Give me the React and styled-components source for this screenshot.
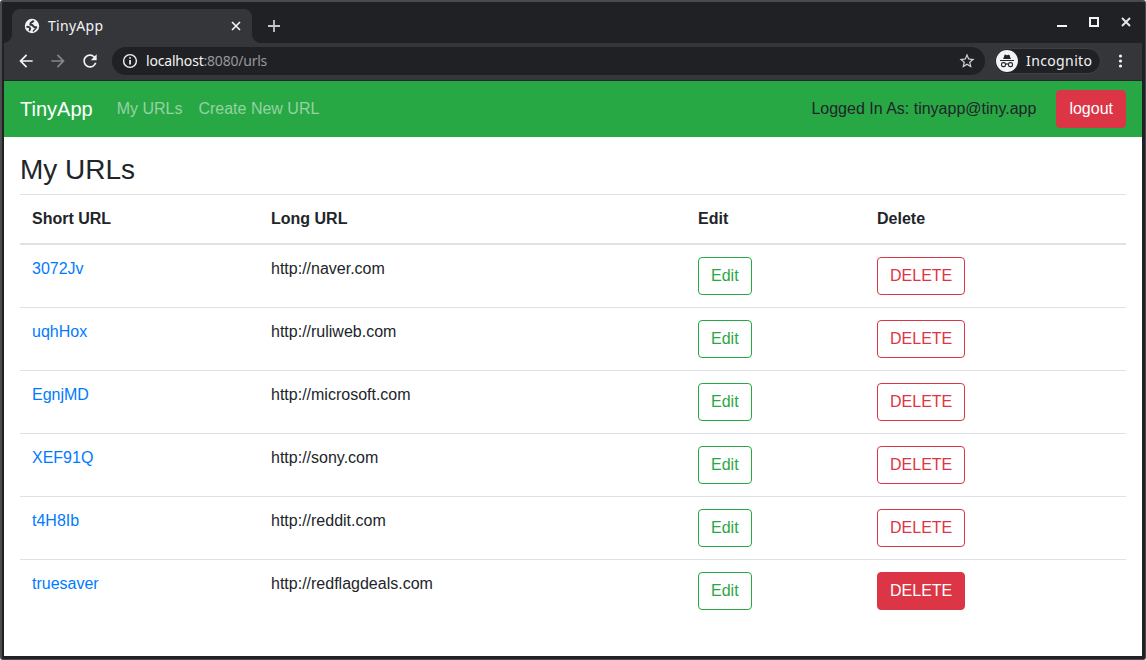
import React from "react";
import styled, { createGlobalStyle, css } from "styled-components";

const Global = createGlobalStyle`
  *, *::before, *::after { box-sizing: border-box; }
  html, body { margin: 0; padding: 0; overflow: hidden; background: #fff; }
  body { font-family: "Liberation Sans", Arial, sans-serif; font-size: 16px; line-height: 1.5; color: #212529; }
`;

const Frame = styled.div`
  width: 1146px; height: 660px;
  border: solid #4a4b4a; border-width: 2px 1px 1px 2px;
  border-radius: 3px;
  background: #202124;
  padding: 0 3px 3px 2px;
  display: flex; flex-direction: column;
`;
const TabStrip = styled.div`
  height: 41px; flex: none; display: flex; align-items: flex-end;
`;
const Tab = styled.div`
  position: relative;
  width: 240px; height: 34px; margin-left: 8px;
  background: #35363a; border-radius: 8px 8px 0 0;
  display: flex; align-items: center; padding: 0 10px 0 12px;
  color: #f1f3f4;
  &::before, &::after {
    content: ""; position: absolute; bottom: 0; width: 8px; height: 8px;
  }
  &::before { left: -8px; background: radial-gradient(circle at 0 0, #202124 7.5px, #35363a 8px); }
  &::after { right: -8px; background: radial-gradient(circle at 100% 0, #202124 7.5px, #35363a 8px); }
`;
const ChromeText = styled.span`
  font-family: "Noto Sans", "Open Sans", sans-serif;
  font-size: 14px; line-height: 20px; white-space: pre;
  letter-spacing: ${(p) => p.$spacing || 0}px;
  color: ${(p) => p.$color || "#f1f3f4"};
`;
const TabTitle = styled(ChromeText)` margin-left: 8px; flex: 1; `;
const NewTab = styled.div` display: flex; margin-left: 14px; padding-bottom: 9px; `;
const WindowControls = styled.div`
  margin-left: auto; align-self: flex-start; display: flex; gap: 16px; padding: 12px 8px 0 0;
`;
const Toolbar = styled.div`
  height: 38px; flex: none; background: #35363a; border-bottom: 1px solid #27282b;
  display: flex; align-items: center; padding: 0 13px 1px 12px;
`;
const NavIcons = styled.div` display: flex; gap: 12px; `;
const Omnibox = styled.div`
  width: 873px; height: 28px; margin-left: 12px; border-radius: 14px; background: #202124;
  display: flex; align-items: center; padding: 0 9px 0 8px;
`;
const Address = styled.div` flex: 1; margin-left: 6px; display: flex; `;
const Profile = styled.div`
  width: 107px; height: 26px; margin-left: 9px; border-radius: 13px;
  background: #202124; border: 1px solid #3f4043;
  display: flex; align-items: center; gap: 8px; padding-left: 1px;
`;
const Menu = styled.div` margin-left: auto; display: flex; `;

const Page = styled.div` flex: 1; background: #fff; `;
const Navbar = styled.nav`
  height: 56px; background: #28a745; padding: 8px 16px; display: flex; align-items: center;
`;
const Brand = styled.a` font-size: 20px; line-height: 30px; color: #fff; margin-right: 16px; `;
const NavLink = styled.a` padding: 0 8px; color: rgba(255, 255, 255, 0.5); `;
const Account = styled.div` margin-left: auto; display: flex; align-items: center; gap: 20px; `;

const Button = styled.button`
  font: inherit; line-height: 24px; padding: 6px 12px; height: 38px;
  border-radius: 4px; border: 1px solid ${(p) => p.$color}; white-space: nowrap;
  ${(p) => p.$filled
    ? css`color: #fff; background: ${p.$color};`
    : css`color: ${p.$color}; background: transparent;`}
`;
const Content = styled.main` padding: 16px 16px 0; `;
const Heading = styled.h3`
  margin: 0; height: 41px; font-size: 28px; font-weight: 500; line-height: 33.6px;
`;
const Row = styled.div`
  display: grid; grid-template-columns: 239px 427px 179px 1fr;
  border-top: 1px solid #dee2e6;
  ${(p) => p.$header && css`font-weight: 700; border-bottom: 2px solid #dee2e6;`}
  ${(p) => p.$first && css`border-top: 0;`}
`;
const Cell = styled.div` padding: 12px; `;
const Link = styled.a` color: #007bff; `;

const GREEN = "#28a745";
const RED = "#dc3545";
const urls = [
  ["3072Jv", "http://naver.com"],
  ["uqhHox", "http://ruliweb.com"],
  ["EgnjMD", "http://microsoft.com"],
  ["XEF91Q", "http://sony.com"],
  ["t4H8Ib", "http://reddit.com"],
  ["truesaver", "http://redflagdeals.com"],
];

const Svg = ({ s = 20, color = "#f1f3f4", children }) => (
  <svg width={s} height={s} viewBox="0 0 24 24" fill={color}>{children}</svg>
);
const Globe = () => (
  <svg width="16" height="16" viewBox="0 0 16 16">
    <circle cx="8" cy="8" r="7.2" fill="#f1f3f4" />
    <g fill="none" stroke="#35363a" strokeLinecap="round" strokeLinejoin="round">
      <path strokeWidth="2" d="M9.300 3.200L6.800 4.800 6.300 6.500 8.600 7.300 10 8.900 12.300 9.200" />
      <path strokeWidth="1.900" d="M3.200 8.800L5.500 9.200 6.200 10.600 5.600 12.300" />
      <path strokeWidth="1.400" d="M12 10L10.800 11.500 9.300 12.900" />
    </g>
  </svg>
);
const Incognito = () => (
  <svg width="22" height="22" viewBox="0 0 22 22">
    <circle cx="11" cy="11" r="11" fill="#f1f3f4" />
    <path fill="#202124" d="M7.200 9l1.300-3.900c.2-.5.600-.6 1-.4l1.500.5 1.500-.5c.4-.2.8.1 1 .4L14.800 9zM4 10h14v1H4z" />
    <g fill="none" stroke="#202124" strokeWidth="1.100"><rect x="5.500" y="12.600" width="4" height="4" rx="1.700" /><rect x="12.500" y="12.600" width="4" height="4" rx="1.700" /><path d="M9.500 14.300q1.500-.8 3 0" /></g>
  </svg>
);

export default function App() {
  return (
    <>
      <Global />
      <Frame>
        <TabStrip>
          <Tab>
            <Globe />
            <TabTitle $spacing={0.28}>TinyApp</TabTitle>
            <svg width="12" height="12" viewBox="0 0 12 12" stroke="#f1f3f4" strokeWidth="1.700"><path d="M2 2l8 8M10 2l-8 8" /></svg>
          </Tab>
          <NewTab>
            <svg width="16" height="16" viewBox="0 0 16 16" stroke="#c4c7ca" strokeWidth="1.800"><path d="M8 2v12M2 8h12" /></svg>
          </NewTab>
          <WindowControls>
            <svg width="16" height="16" viewBox="0 0 16 16" fill="#f1f3f4"><path d="M3 11h10v2H3z" /></svg>
            <svg width="16" height="16" viewBox="0 0 16 16" fill="none" stroke="#f1f3f4" strokeWidth="2"><path d="M4 4h8v8H4z" /></svg>
            <svg width="16" height="16" viewBox="0 0 16 16" stroke="#e4e6e7" strokeWidth="2"><path d="M4 4l8 8M12 4l-8 8" /></svg>
          </WindowControls>
        </TabStrip>
        <Toolbar>
          <NavIcons>
            <Svg><path d="M20 11H7.830l5.590-5.590L12 4l-8 8 8 8 1.410-1.410L7.830 13H20v-2z" /></Svg>
            <Svg color="#85868a"><path d="M12 4l-1.410 1.410L16.170 11H4v2h12.170l-5.580 5.590L12 20l8-8z" /></Svg>
            <Svg><path d="M17.650 6.350A7.958 7.958 0 0 0 12 4c-4.420 0-7.990 3.580-7.990 8s3.570 8 7.990 8c3.730 0 6.840-2.550 7.730-6h-2.080A5.990 5.990 0 0 1 12 18c-3.310 0-6-2.690-6-6s2.690-6 6-6c1.660 0 3.140.69 4.220 1.780L13 11h7V4l-2.350 2.350z" /></Svg>
          </NavIcons>
          <Omnibox>
            <svg width="20" height="20" viewBox="0 0 20 20" fill="#f1f3f4"><circle cx="10" cy="10" r="6.400" fill="none" stroke="#f1f3f4" strokeWidth="1.400" /><path d="M9.200 6.200h1.700v1.600H9.200zM9.200 9h1.700v4.600H9.200z" /></svg>
            <Address>
              <ChromeText $spacing={-0.18}>localhost</ChromeText>
              <ChromeText $spacing={-0.22} $color="#96999d">:8080/urls</ChromeText>
            </Address>
            <Svg s={18} color="#d3d5d8"><path d="M22 9.240l-7.190-.62L12 2 9.190 8.630 2 9.240l5.460 4.730L5.820 21 12 17.270 18.180 21l-1.630-7.030L22 9.240zM12 15.400l-3.760 2.270 1-4.280-3.320-2.880 4.380-.38L12 6.100l1.710 4.040 4.380.38-3.320 2.880 1 4.280L12 15.400z" /></Svg>
          </Omnibox>
          <Profile>
            <Incognito />
            <ChromeText $spacing={0.38}>Incognito</ChromeText>
          </Profile>
          <Menu>
            <svg width="17" height="16" viewBox="0 0 17 16" fill="#f1f3f4"><circle cx="8.500" cy="3" r="1.600" /><circle cx="8.500" cy="8" r="1.600" /><circle cx="8.500" cy="13" r="1.600" /></svg>
          </Menu>
        </Toolbar>
        <Page>
          <Navbar>
            <Brand>TinyApp</Brand>
            <NavLink>My URLs</NavLink>
            <NavLink>Create New URL</NavLink>
            <Account>
              <span>Logged In As: tinyapp@tiny.app</span>
              <Button $color={RED} $filled>logout</Button>
            </Account>
          </Navbar>
          <Content>
            <Heading>My URLs</Heading>
            <Row $header><Cell>Short URL</Cell><Cell>Long URL</Cell><Cell>Edit</Cell><Cell>Delete</Cell></Row>
            {urls.map(([id, url], i) => (
              <Row key={id} $first={i === 0}>
                <Cell><Link>{id}</Link></Cell>
                <Cell>{url}</Cell>
                <Cell><Button $color={GREEN}>Edit</Button></Cell>
                <Cell><Button $color={RED} $filled={i === urls.length - 1}>DELETE</Button></Cell>
              </Row>
            ))}
          </Content>
        </Page>
      </Frame>
    </>
  );
}
